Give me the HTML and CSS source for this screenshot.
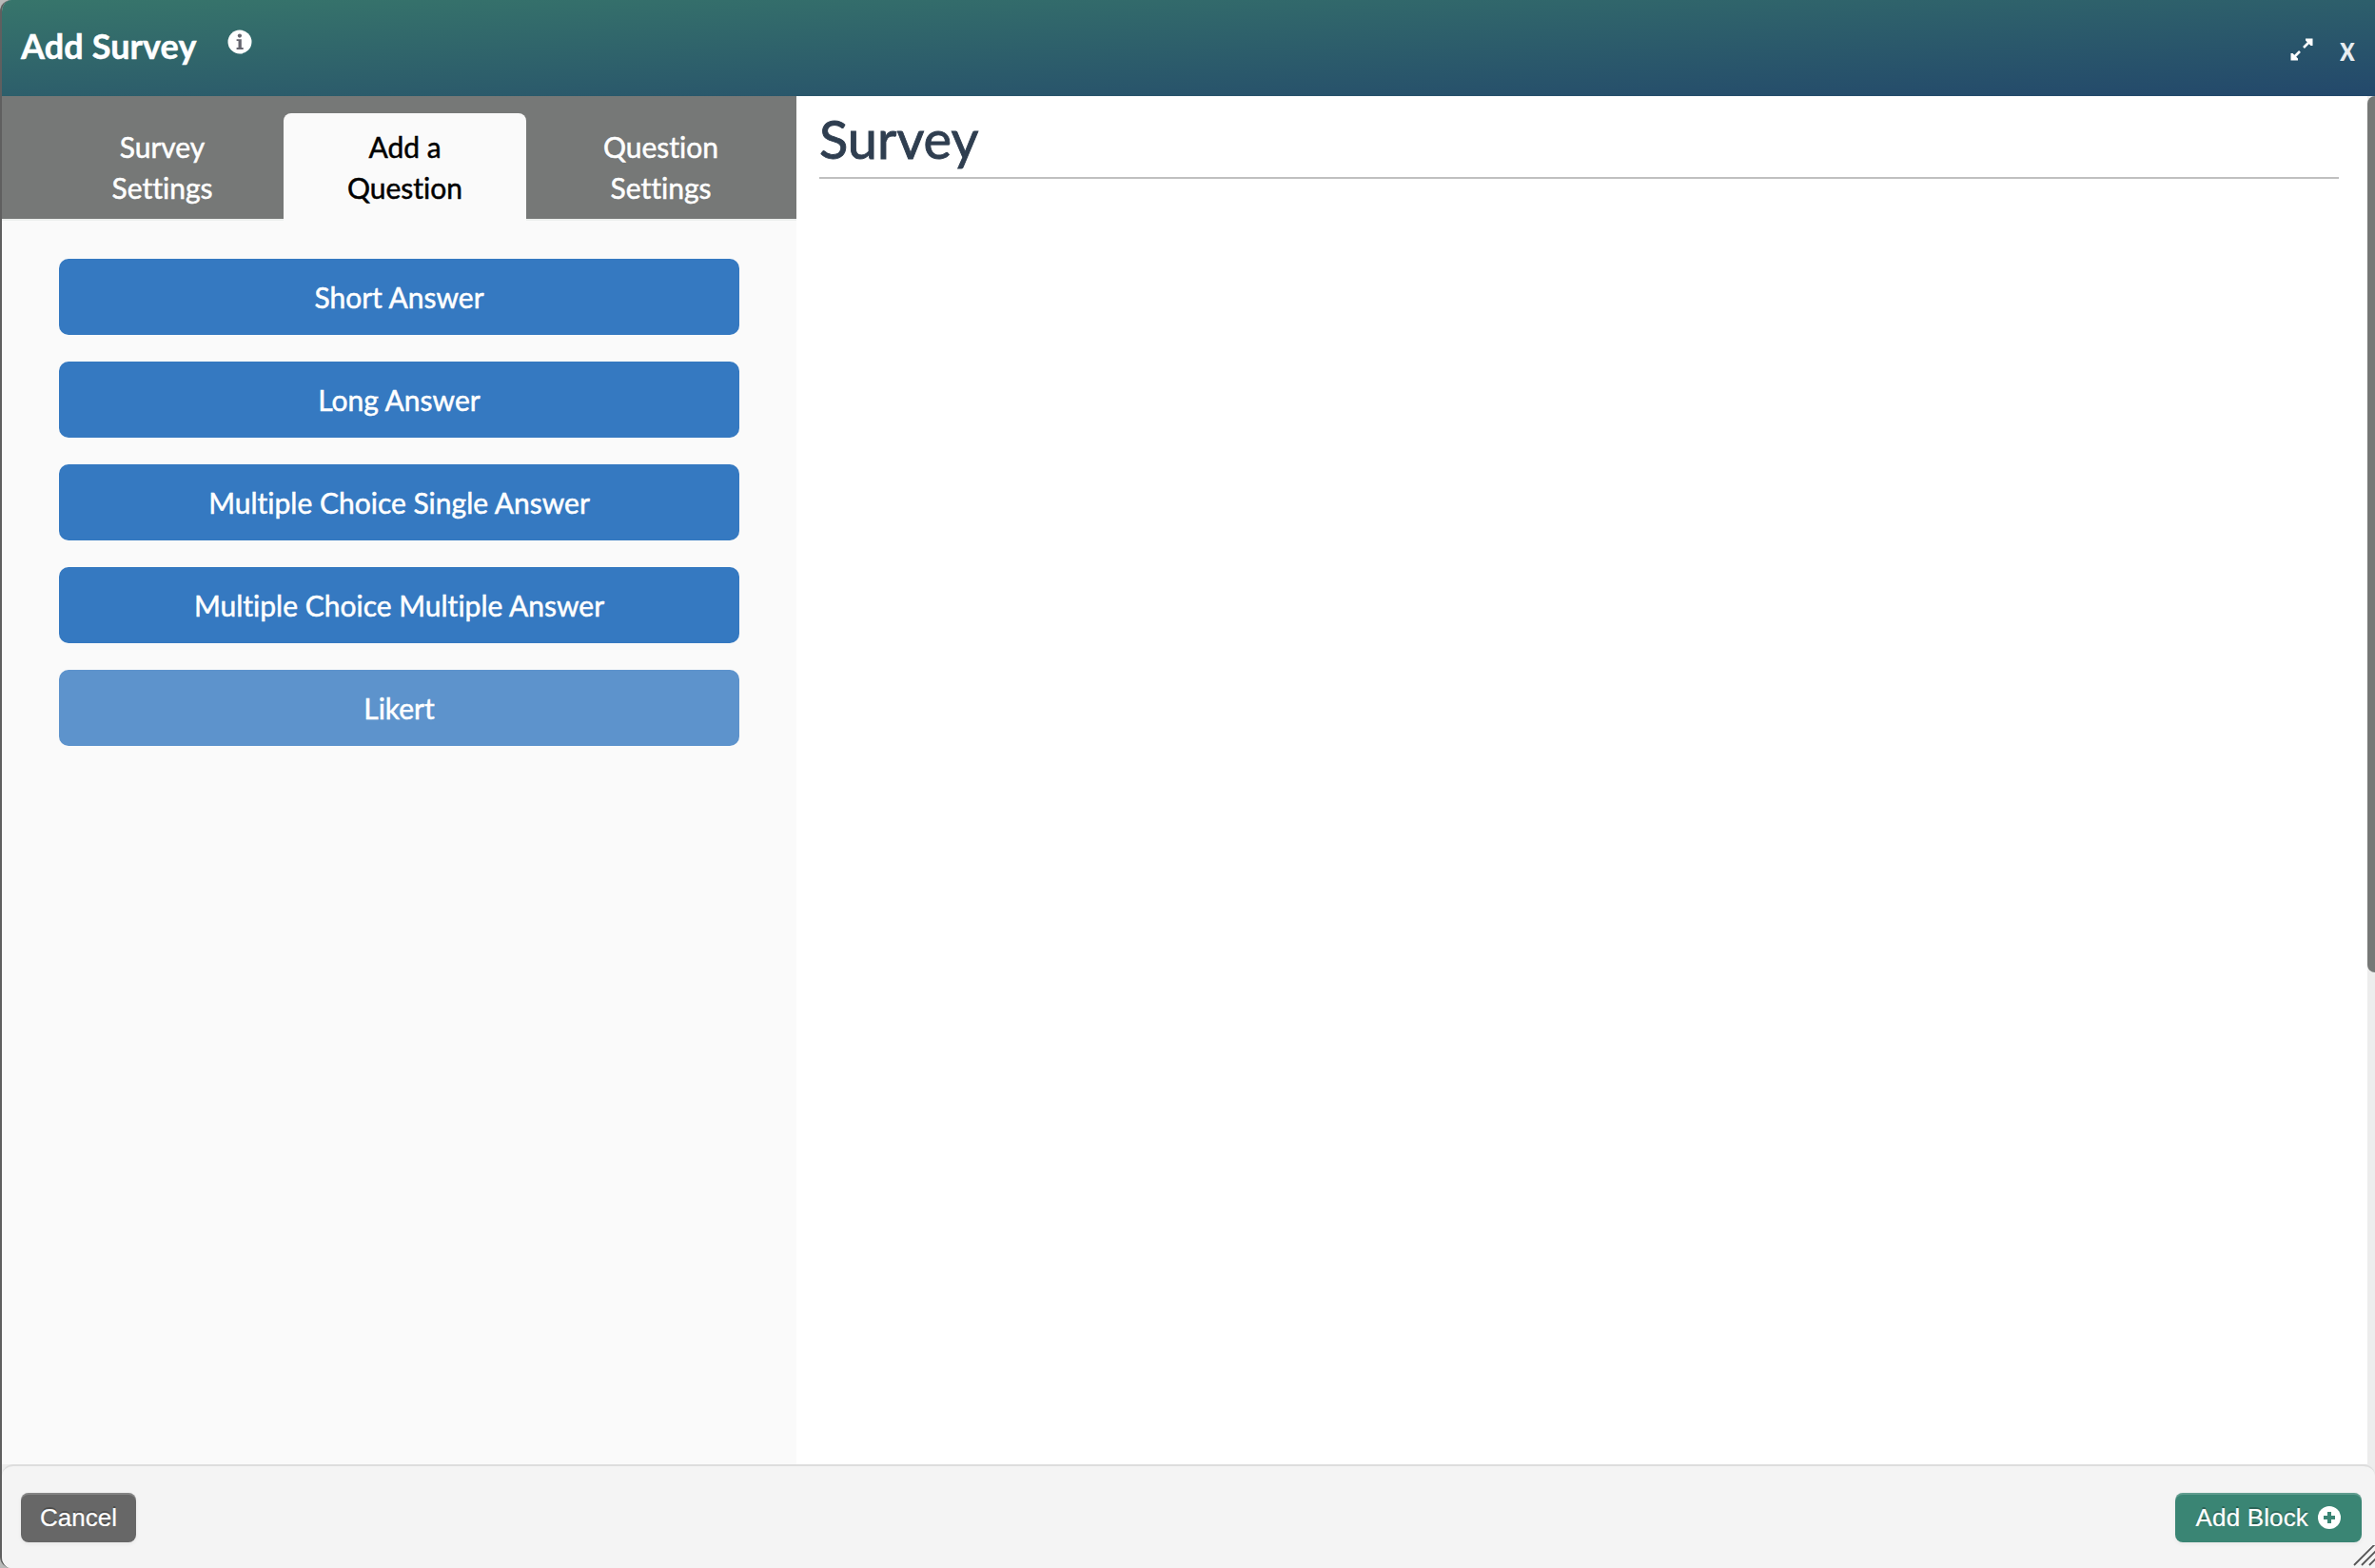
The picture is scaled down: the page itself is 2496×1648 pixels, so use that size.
FILE: index.html
```html
<!DOCTYPE html>
<html lang="en">
<head>
<meta charset="utf-8">
<title>Add Survey</title>
<link rel="stylesheet" href="styles.css">
</head>
<body>
<div class="dialog">
  <header class="titlebar">
    <h1 class="title">Add Survey</h1>
    <svg class="info" viewBox="0 0 26 26"><circle cx="13" cy="13" r="12.5" fill="#fff"/><circle cx="12.9" cy="6.6" r="2.1" fill="#65656f"/><path d="M9.6 10.2h5.2v8.800h1.9v1.900H9.600V19h1.900v-6.900H9.600z" fill="#65656f"/></svg>
    <div class="window-tools">
      <svg class="expand" viewBox="0 0 24 24"><path d="M14 10L21 3M10 14L3 21" stroke="#fff" stroke-width="2.6" fill="none"/><path d="M16 0.500H23.500V8H21.500L16 2.500zM8 23.500H0.500V16H2.500L8 21.500z" fill="#fff"/></svg>
      <span class="close">x</span>
    </div>
  </header>
  <main class="content">
    <aside class="sidebar">
      <nav class="tabs">
        <a class="tab tab-first">Survey<br>Settings</a>
        <a class="tab tab-active">Add a<br>Question</a>
        <a class="tab tab-last">Question<br>Settings</a>
      </nav>
      <div class="types">
        <button class="type">Short Answer</button>
        <button class="type">Long Answer</button>
        <button class="type">Multiple Choice Single Answer</button>
        <button class="type">Multiple Choice Multiple Answer</button>
        <button class="type type-muted">Likert</button>
      </div>
    </aside>
    <section class="preview"><h2 class="heading">Survey</h2></section>
    <div class="scrollbar"><div class="thumb"></div></div>
  </main>
  <div class="footer-wrap">
    <footer class="footer">
      <button class="btn cancel">Cancel</button>
      <button class="btn add">Add Block <svg class="plus" viewBox="0 0 24 24"><circle cx="12" cy="12" r="12" fill="#fff"/><path d="M12 6v12M6 12h12" stroke="#3a8574" stroke-width="4"/></svg></button>
    </footer>
  </div>
</div>
<svg class="grip" viewBox="0 0 24 24"><path d="M2 21L25 -2M10 21L25 6M18 21L25 14" stroke="#555" stroke-width="1.8" fill="none"/></svg>
</body>
</html>
```
FILE: styles.css
```css
* { box-sizing: border-box; }
body { margin: 0; background: #b9bab9; font-family: Lato, sans-serif; font-variant-ligatures: none; }
.dialog { height: 1648px; display: flex; flex-direction: column; border-left: 2px solid #5f5f5f; border-radius: 12px 0 0 12px; overflow: hidden; }
.titlebar { height: 101px; flex: none; display: flex; align-items: flex-start; background: linear-gradient(to bottom right, #37756b, #23486b); color: #fff; padding: 0 20px; }
.title { margin: 27px 0 0; width: 184px; white-space: nowrap; font-size: 36px; line-height: 43px; font-weight: 700; letter-spacing: 0.1px; -webkit-text-stroke: 0.5px; }
.info { width: 26px; height: 26px; margin: 31px 0 0 33px; }
.window-tools { margin-left: auto; display: flex; align-items: flex-start; }
.expand { width: 24px; height: 24px; margin: 40px 28px 0 0; }
.close { width: 17px; font: 700 37px/40px Lato, sans-serif; margin-top: 30px; color: #e8edf0; transform: scaleX(.82); transform-origin: left; }
.content { flex: 1; display: flex; background: #fff; min-height: 0; }
.sidebar { width: 835px; background: #fafafa; }
.tabs { height: 131px; background: #767877; display: flex; padding-top: 18px; border-bottom: 2px solid #ecefed; }
.tab { padding-top: 14px; font-size: 30px; line-height: 43px; text-align: center; color: #fff; -webkit-text-stroke: 0.5px; }
.tab-first { width: 255px; margin-left: 41px; }
.tab-active { width: 255px; height: 113px; background: #fafafa; color: #000; border-radius: 8px 8px 0 0; }
.tab-last { width: 255px; margin-left: 14px; }
.types { padding: 40px 60px; display: flex; flex-direction: column; gap: 28px; }
.type { height: 80px; border: 0; border-radius: 10px; background: #3579c1; color: #fff; font: 400 30px/43px Lato, sans-serif; font-variant-ligatures: none; padding: 1px 0 0; -webkit-text-stroke: 0.5px; }
.type-muted { background: #5d93cc; }
.preview { flex: 1; padding: 0 30px 0 24px; }
.heading { margin: 0; height: 87px; padding-top: 11px; border-bottom: 2px solid #c0c0c0; color: #2f3e50; font-size: 56px; line-height: 67px; font-weight: 400; -webkit-text-stroke: 0.9px; }
.scrollbar { width: 8px; background: #ededed; }
.thumb { height: 921px; background: #767877; border-radius: 8px 0 0 8px; }
.footer-wrap { background: #ededed; }
.footer { height: 109px; border-top: 2px solid #ddd; border-radius: 12px 12px 0 0; background: #f4f4f4; display: flex; justify-content: space-between; align-items: flex-start; padding: 28px 14px 0 20px; }
.btn { height: 52px; border: 0; border-radius: 8px; color: #fff; font: 400 26px/30px "Liberation Sans", sans-serif; -webkit-text-stroke: 0.2px; text-shadow: 0 -2px 0 rgba(0,0,0,.25); box-shadow: inset 0 2px 0 rgba(255,255,255,.2), 0 2px 4px rgba(0,0,0,.05); display: flex; align-items: center; justify-content: center; padding: 0; white-space: pre; }
.cancel { width: 121px; background: #676767; }
.add { width: 196px; background: #3a8574; letter-spacing: 0.15px; }
.plus { width: 24px; height: 24px; margin-left: 3px; }
.grip { position: absolute; right: 0; bottom: 0; width: 24px; height: 24px; overflow: hidden; }
```
